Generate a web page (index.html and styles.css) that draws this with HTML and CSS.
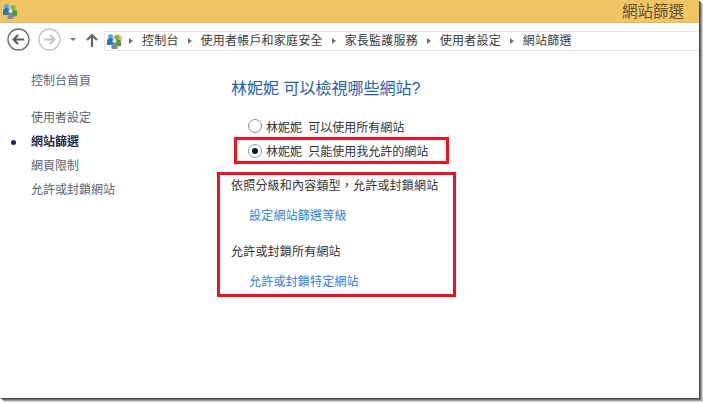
FILE: index.html
```html
<!DOCTYPE html>
<html lang="zh-Hant">
<head>
  <meta charset="UTF-8">
  <title>網站篩選</title>
  <link rel="stylesheet" href="styles.css">
</head>
<body>
  <div class="window">
    <div class="titlebar">
      <svg class="people" width="16" height="16" viewBox="0 0 16 16">
        <circle cx="11.5" cy="6" r="4.5" fill="#f3b661"/>
        <circle cx="11" cy="4.5" r="2.2" fill="#79b84a"/>
        <path d="M8 14V9c0-1.6 1.3-2.6 3-2.6s4 1 4 2.8V13z" fill="#4f9d3a"/>
        <circle cx="4.5" cy="3.5" r="2.5" fill="#5aa7df"/>
        <path d="M1 12V8c0-1.8 1.6-3 3.5-3S8 6.2 8 8v4z" fill="#2577bd"/>
        <circle cx="8.5" cy="8" r="2" fill="#e6edf4"/>
        <path d="M5.5 16v-2.500c0-2 1.200-3.500 3-3.500s3 1.500 3 3.500V16z" fill="#7d8c9c"/>
      </svg>
      <span class="title">網站篩選</span>
    </div>

    <div class="navbar">
      <svg class="nav-btn" width="23" height="23" viewBox="0 0 23 23">
        <circle cx="11.5" cy="11.5" r="10.5" fill="#fff" stroke="#6b6b6b" stroke-width="1.3"/>
        <path d="M17 11.5H7M11 7l-4.500 4.500L11 16" fill="none" stroke="#5a5a5a" stroke-width="2"/>
      </svg>
      <svg class="nav-btn" width="23" height="23" viewBox="0 0 23 23">
        <circle cx="11.5" cy="11.5" r="10.5" fill="#fff" stroke="#c4c4c4" stroke-width="1.3"/>
        <path d="M6 11.5h10M12 7l4.500 4.500L12 16" fill="none" stroke="#c4c4c4" stroke-width="2"/>
      </svg>
      <span class="drop"></span>
      <svg class="up" width="12" height="14" viewBox="0 0 12 14">
        <path d="M6 14V2M1 7l5-5 5 5" fill="none" stroke="#666" stroke-width="2.2"/>
      </svg>
      <div class="address">
        <svg class="people" width="16" height="16" viewBox="0 0 16 16">
          <circle cx="11.5" cy="6" r="4.5" fill="#f3b661"/>
          <circle cx="11" cy="4.5" r="2.2" fill="#79b84a"/>
          <path d="M8 14V9c0-1.6 1.3-2.6 3-2.6s4 1 4 2.8V13z" fill="#4f9d3a"/>
          <circle cx="4.5" cy="3.5" r="2.5" fill="#5aa7df"/>
          <path d="M1 12V8c0-1.8 1.6-3 3.5-3S8 6.2 8 8v4z" fill="#2577bd"/>
          <circle cx="8.5" cy="8" r="2" fill="#e6edf4"/>
          <path d="M5.5 16v-2.500c0-2 1.200-3.500 3-3.500s3 1.500 3 3.500V16z" fill="#7d8c9c"/>
        </svg>
        <span class="crumb">控制台</span>
        <span class="crumb">使用者帳戶和家庭安全</span>
        <span class="crumb">家長監護服務</span>
        <span class="crumb">使用者設定</span>
        <span class="crumb">網站篩選</span>
      </div>
    </div>

    <div class="content">
      <nav class="sidebar">
        <a class="side-link home">控制台首頁</a>
        <a class="side-link">使用者設定</a>
        <a class="side-link current">網站篩選</a>
        <a class="side-link">網頁限制</a>
        <a class="side-link">允許或封鎖網站</a>
      </nav>
      <main class="main">
        <h1>林妮妮 可以檢視哪些網站?</h1>
        <label class="radio-row first"><span class="radio"></span>林妮妮 可以使用所有網站</label>
        <div class="mark mark-radio">
          <label class="radio-row"><span class="radio on"></span>林妮妮 只能使用我允許的網站</label>
        </div>
        <div class="mark mark-options">
          <p class="opt">依照分級和內容類型，允許或封鎖網站</p>
          <a class="opt-link">設定網站篩選等級</a>
          <p class="opt second">允許或封鎖所有網站</p>
          <a class="opt-link">允許或封鎖特定網站</a>
        </div>
      </main>
    </div>
  </div>
</body>
</html>
```

FILE: styles.css
```css
html, body { margin: 0; padding: 0; height: 100%; background: #fff; overflow: hidden; }
body { font-family: "Liberation Sans", "Noto Sans CJK TC", sans-serif; font-size: 12px; color: #333; }

.window {
  width: 699px;
  height: 398px;
  background: #fff;
  box-shadow: 1px 1px 0 #4a4a4a, 2px 2px 0 #707070, 3px 3px 0 #a0a0a0, 4px 4px 0 #d4d4d4;
}

.titlebar {
  height: 23px;
  background: #f0c566;
  border-bottom: 1px solid #e2b95f;
  display: flex;
  align-items: center;
  padding: 0 15px 0 2px;
  box-sizing: border-box;
}
.title { margin-left: auto; font-size: 15.5px; color: #5f5134; padding-bottom: 3px; }

.navbar {
  display: flex;
  align-items: center;
  height: 23px;
  margin-top: 5px;
  padding-left: 7px;
}
.nav-btn { margin-right: 8px; }
.nav-btn + .nav-btn { margin-right: 0; }
.drop {
  width: 0;
  height: 0;
  margin: 0 10px 0 9px;
  border-left: 3px solid transparent;
  border-right: 3px solid transparent;
  border-top: 3px solid #777;
}
.up { margin-right: 6px; }
.address {
  flex: 1;
  height: 20px;
  margin-top: 2px;
  display: flex;
  align-items: center;
  padding-left: 1px;
  border: 1px solid #e8e8e8;
  border-right: none;
  box-sizing: border-box;
}
.crumb { color: #3a3a3a; margin-right: 2px; padding-bottom: 2px; letter-spacing: 0.2px; }
.crumb::before {
  content: "";
  display: inline-block;
  margin: 0 9px 1px 7px;
  border-left: 4px solid #6e6e6e;
  border-top: 3px solid transparent;
  border-bottom: 3px solid transparent;
}

.content { display: flex; }
.sidebar {
  width: 231px;
  padding: 22px 0 0 31px;
  box-sizing: border-box;
  display: flex;
  flex-direction: column;
}
.side-link { height: 24px; line-height: 17px; color: #5a6472; }
.side-link.home { margin-bottom: 13px; }
.side-link.current { position: relative; font-weight: bold; color: #1c2a4e; }
.side-link.current::before {
  content: "";
  position: absolute;
  left: -20px;
  top: 6px;
  width: 5px;
  height: 5px;
  border-radius: 50%;
  background: #1c2a4e;
}

.main { flex: 1; }
h1 {
  margin: 28px 0 0;
  font-size: 16px;
  line-height: 20px;
  font-weight: normal;
  color: #1f5fae;
}
.radio-row { display: flex; align-items: center; color: #333; word-spacing: 3px; }
.radio-row.first { margin: 18px 0 0 17px; height: 18px; }
.radio {
  width: 12px;
  height: 12px;
  margin-right: 4px;
  border: 1px solid #8c8c8c;
  border-radius: 50%;
  background: #fff;
  flex: none;
  position: relative;
}
.radio.on { border-color: #6aa4dc; }
.radio.on::after {
  content: "";
  position: absolute;
  left: 3px;
  top: 3px;
  width: 6px;
  height: 6px;
  border-radius: 50%;
  background: #111;
}

.mark { border: 3px solid #ee1122; box-sizing: border-box; }
.mark-radio {
  width: 215px;
  height: 27px;
  margin: 2px 0 0 3px;
  padding-left: 11px;
  display: flex;
  align-items: center;
}
.mark-options {
  width: 239px;
  height: 125px;
  margin: 8px 0 0 -14px;
  padding: 3px 0 0 11px;
}
.opt { margin: 0; line-height: 17px; letter-spacing: 0.2px; }
.opt-link { display: block; color: #2a7fd4; margin: 13px 0 0 18px; line-height: 17px; letter-spacing: 0.2px; }
.opt.second { margin-top: 19px; }
```
